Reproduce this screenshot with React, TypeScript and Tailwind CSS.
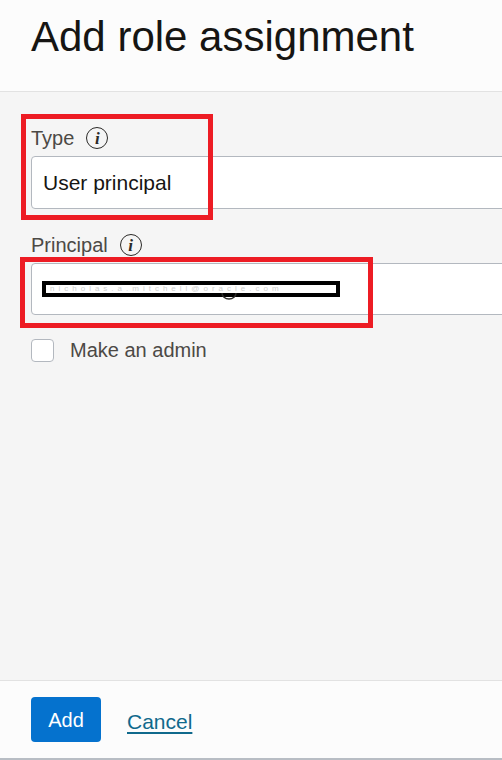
import React from "react";

function InfoIcon() {
  return (
    <span className="relative flex h-[22px] w-[22px] items-center justify-center rounded-full border-[1.5px] border-[#2b2a28]">
      <span className="font-['Liberation_Serif',serif] text-[17px] font-bold italic leading-none text-[#2b2a28]">
        i
      </span>
    </span>
  );
}

function FieldLabel({ text }: { text: string }) {
  return (
    <div className="flex items-center gap-[12px] text-[20px] leading-[24px] text-[#4c4945]">
      <span>{text}</span>
      <InfoIcon />
    </div>
  );
}

export default function App() {
  return (
    <div className="relative flex h-[760px] w-[502px] flex-col overflow-hidden bg-[#f5f5f5] font-['Liberation_Sans',Arial,sans-serif]">
      <header className="h-[92px] shrink-0 border-b border-[#e2e2e2] bg-[#fcfcfc] pl-[31px] pt-[13px]">
        <h1 className="whitespace-nowrap text-[42px] leading-[48px] text-[#161513]">Add role assignment</h1>
      </header>

      <main className="flex-1 overflow-hidden pl-[31px] pt-[34px]">
        <FieldLabel text="Type" />
        <div className="mt-[6px] flex h-[53px] w-[500px] items-center rounded-[4px] border border-[#b3b8bf] bg-white pl-[11px] text-[21px] text-[#161513]">
          User principal
        </div>

        <div className="mt-[24px]">
          <FieldLabel text="Principal" />
        </div>
        <div className="relative mt-[6px] flex h-[52px] w-[500px] items-center rounded-[4px] border border-[#b3b8bf] bg-white pl-[10px]">
          {/* redacted value */}
          <div className="flex h-[16px] w-[298px] items-center border-[4px] border-black bg-white pl-[4px]">
            <span className="whitespace-nowrap text-[8px] leading-[8px] tracking-[4px] text-[#cfcfcf]">
              nicholas.a.mitchell@oracle.com
            </span>
          </div>
          <svg className="absolute left-[188px] top-[28px]" width="18" height="8" viewBox="0 0 18 8">
            <path d="M2 1 A7 6 0 0 0 16 1" fill="none" stroke="#2b2a28" strokeWidth="1.5" />
          </svg>
        </div>

        <label className="mt-[23px] flex items-center gap-[16px]">
          <span className="h-[23px] w-[23px] rounded-[4px] border border-[#b3b8bf] bg-white" />
          <span className="text-[20px] leading-[24px] text-[#4c4945]">Make an admin</span>
        </label>
      </main>

      <footer className="flex h-[80px] shrink-0 items-start gap-[26px] border-b-2 border-t border-b-[#b8bdc4] border-t-[#e2e2e2] bg-[#fcfcfc] pl-[31px] pt-[16px]">
        <button className="h-[45px] w-[70px] rounded-[4px] bg-[#0572ce] text-[20px] text-white">Add</button>
        <a className="mt-[9px] text-[21px] text-[#10698c] underline decoration-2 underline-offset-[3px]" href="#">
          Cancel
        </a>
      </footer>

      <div className="pointer-events-none absolute left-[21px] top-[114px] h-[106px] w-[192px] border-[5px] border-[#ed1c24]" />
      <div className="pointer-events-none absolute left-[20px] top-[257px] h-[71px] w-[353px] border-[5px] border-[#ed1c24]" />
    </div>
  );
}
